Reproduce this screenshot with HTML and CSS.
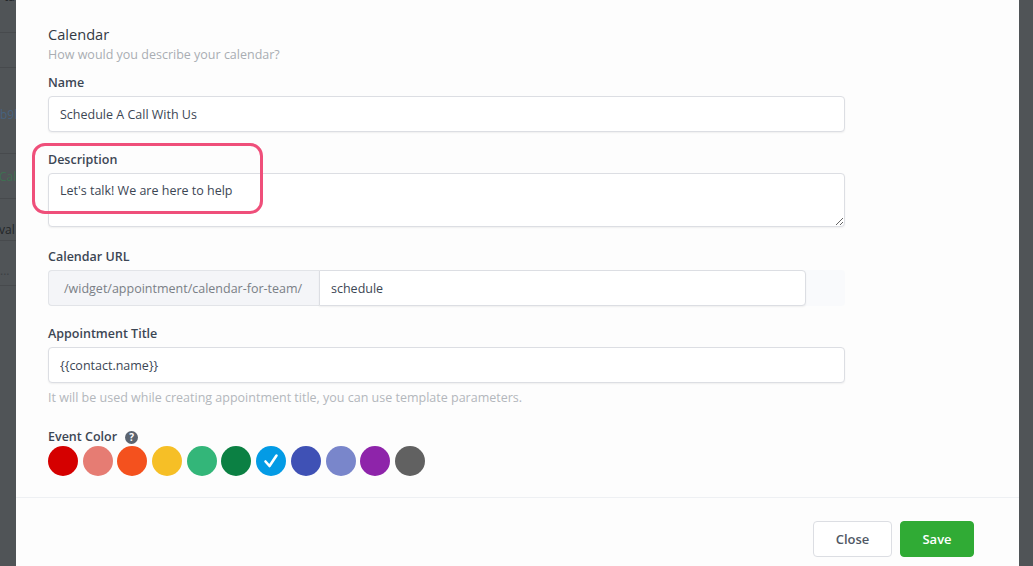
FILE: index.html
```html
<!DOCTYPE html>
<html lang="en">
<head>
  <meta charset="UTF-8">
  <meta name="viewport" content="width=device-width, initial-scale=1.0">
  <title>Calendar Settings</title>
  <link rel="stylesheet" href="styles.css">
</head>
<body>
  <!-- page behind the dimmed backdrop -->
  <div class="backdrop-strip">
    <div class="bg-row bg-top">ta</div>
    <div class="bg-row bg-b"></div>
    <div class="bg-row bg-c bg-blue">b9l</div>
    <div class="bg-row bg-d bg-green">Cal</div>
    <div class="bg-row bg-e">val</div>
    <div class="bg-row bg-f bg-dots">...</div>
  </div>

  <div class="modal">
    <div class="modal-body">
      <h3 class="section-title">Calendar</h3>
      <p class="section-sub">How would you describe your calendar?</p>

      <div class="form-group">
        <label for="cal-name">Name</label>
        <input type="text" id="cal-name" value="Schedule A Call With Us">
      </div>

      <div class="form-group">
        <label for="cal-desc">Description</label>
        <textarea id="cal-desc">Let's talk! We are here to help</textarea>
        <span class="annotation"></span>
      </div>

      <div class="form-group url-field">
        <label for="cal-slug">Calendar URL</label>
        <div class="url-group">
          <span class="url-prefix">/widget/appointment/calendar-for-team/</span>
          <input type="text" id="cal-slug" value="schedule">
        </div>
      </div>

      <div class="form-group">
        <label for="appt-title">Appointment Title</label>
        <input type="text" id="appt-title" value="{{contact.name}}">
        <p class="help">It will be used while creating appointment title, you can use template parameters.</p>
      </div>

      <div class="form-group colors">
        <label>Event Color <span class="q-icon">?</span></label>
        <div class="swatches">
          <span class="swatch" style="background:#d50000"></span>
          <span class="swatch" style="background:#e67c73"></span>
          <span class="swatch" style="background:#f4511e"></span>
          <span class="swatch" style="background:#f6bf26"></span>
          <span class="swatch" style="background:#33b679"></span>
          <span class="swatch" style="background:#0b8043"></span>
          <span class="swatch" style="background:#039be5">
            <svg width="18" height="18" viewBox="0 0 18 18"><path d="M3.5 9.5 L7.5 14 L14.5 3.5" fill="none" stroke="#fff" stroke-width="2.6" stroke-linecap="round" stroke-linejoin="round"/></svg>
          </span>
          <span class="swatch" style="background:#3f51b5"></span>
          <span class="swatch" style="background:#7986cb"></span>
          <span class="swatch" style="background:#8e24aa"></span>
          <span class="swatch" style="background:#616161"></span>
        </div>
      </div>
    </div>

    <div class="modal-footer">
      <button class="btn btn-light">Close</button>
      <button class="btn btn-save">Save</button>
    </div>
  </div>

  <div class="backdrop-right"></div>
</body>
</html>
```

FILE: styles.css
```css
/* Base */
body {
  margin: 0;
  padding: 0;
  height: 566px;
  overflow: hidden;
  display: flex;
  background: #505457;
  font-family: 'Open Sans', 'Noto Sans', sans-serif;
  color: #3c4654;
}

/* Backdrop strip on the left */
.backdrop-strip {
  width: 16px;
  flex-shrink: 0;
  overflow: hidden;
  font-size: 12px;
  line-height: 18px;
  color: #222528;
}

.bg-row {
  box-sizing: border-box;
  width: 40px;
  white-space: nowrap;
  border-bottom: 1px solid #474a4d;
}

.bg-top {
  margin-top: -12px;
  height: 45px;
  padding-left: 4px;
}

.bg-b {
  height: 35px;
}

.bg-c {
  height: 86px;
  padding-top: 38px;
}

.bg-d {
  height: 45px;
  padding-top: 14px;
  margin-left: -1px;
}

.bg-e {
  height: 42px;
  padding-top: 22px;
  margin-left: -1px;
}

.bg-f {
  height: 45px;
  padding-top: 21px;
}

.bg-blue {
  color: #47627f;
}

.bg-green {
  color: #3f6f52;
}

.bg-dots {
  color: #3c4044;
}

.backdrop-right {
  width: 14px;
  flex-shrink: 0;
}

/* Modal */
.modal {
  width: 1003px;
  flex-shrink: 0;
  background: #fdfdfd;
  display: flex;
  flex-direction: column;
}

.modal-body {
  padding: 23px 32px 0;
  width: 797px;
}

.section-title {
  margin: 0;
  font-size: 14.6px;
  font-weight: 400;
  line-height: 22px;
  color: #333a44;
}

.section-sub {
  margin: 1px 0 0;
  font-size: 12.5px;
  line-height: 18px;
  color: #a9adb3;
}

.form-group {
  position: relative;
  margin-top: 10px;
}

.form-group + .form-group {
  margin-top: 19px;
}

.form-group.url-field {
  margin-top: 21px;
}

label {
  display: block;
  font-size: 12.5px;
  font-weight: 600;
  line-height: 18px;
  color: #3c4654;
  margin-bottom: 4px;
}

input,
textarea {
  display: block;
  box-sizing: border-box;
  width: 100%;
  height: 36px;
  padding: 0 11px;
  font-family: inherit;
  font-size: 12.5px;
  color: #3c4654;
  background: #fff;
  border: 1px solid #dcdee3;
  border-radius: 4px;
  box-shadow: 0 1px 2px rgba(0, 0, 0, 0.06);
  outline: none;
}

textarea {
  height: 54px;
  padding: 7px 11px;
  line-height: 20px;
  resize: vertical;
}

/* pink annotation round the description field */
.annotation {
  position: absolute;
  left: -16px;
  top: -8px;
  box-sizing: border-box;
  width: 231px;
  height: 71px;
  border: 3px solid #ef4f7a;
  border-radius: 13px;
  pointer-events: none;
}

/* URL field */
.url-group {
  display: flex;
  height: 36px;
  background: #f9fafc;
  border-radius: 4px;
}

.url-prefix {
  box-sizing: border-box;
  width: 271px;
  padding-left: 15px;
  display: flex;
  align-items: center;
  font-size: 12.5px;
  color: #7a7f86;
  background: #f4f5f8;
  border: 1px solid #e2e4e8;
  border-right: none;
  border-radius: 4px 0 0 4px;
}

.url-group input {
  width: 487px;
  height: 36px;
  border-radius: 0 4px 4px 0;
}

.help {
  margin: 6px 0 0;
  font-size: 12.5px;
  line-height: 18px;
  color: #b3b7bc;
}

/* Event colours */
.form-group.colors {
  margin-top: 21px;
}

.colors label {
  margin-bottom: 0;
  display: flex;
  align-items: center;
}

.q-icon {
  display: inline-flex;
  align-items: center;
  justify-content: center;
  width: 13px;
  height: 13px;
  margin-left: 8px;
  border-radius: 50%;
  background: #5b6470;
  color: #fff;
  font-size: 10px;
  font-weight: 700;
  line-height: 1;
}

.swatches {
  display: flex;
  gap: 4.7px;
}

.swatch {
  width: 30px;
  height: 30px;
  border-radius: 50%;
  display: flex;
  align-items: center;
  justify-content: center;
}

/* Footer */
.modal-footer {
  margin-top: 21px;
  border-top: 1px solid #eef0f3;
  padding: 23px 45px 0 0;
  display: flex;
  justify-content: flex-end;
  gap: 8px;
}

.btn {
  height: 36px;
  padding: 0 18px;
  font-family: inherit;
  font-size: 13px;
  font-weight: 600;
  border-radius: 4px;
  cursor: pointer;
}

.btn-light {
  width: 79px;
  background: #fff;
  color: #505864;
  border: 1px solid #dcdee3;
}

.btn-save {
  width: 74px;
  background: #30ab35;
  color: #fff;
  border: 1px solid #30ab35;
}
```
